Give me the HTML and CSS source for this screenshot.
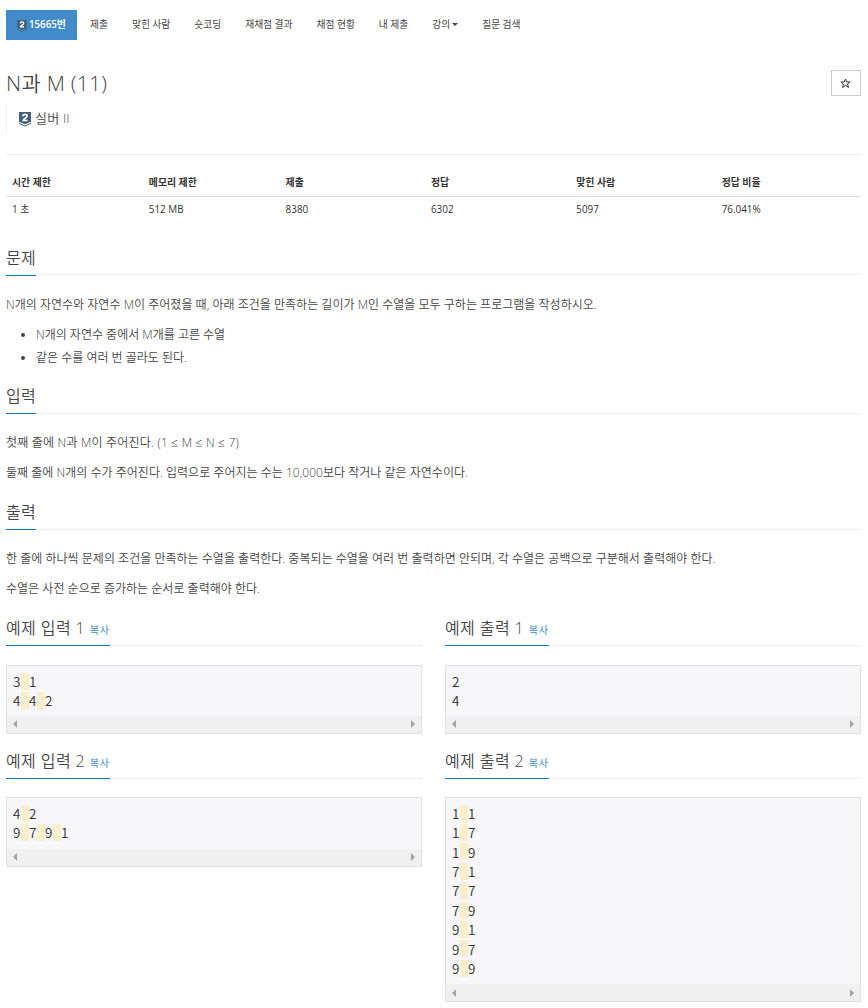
FILE: index.html
```
<!DOCTYPE html>
<html lang="ko">

<head>
    <meta charset="utf-8">
    <title>15665번: N과 M (11)</title>
    <meta name="viewport" content="width=device-width, initial-scale=1.0">
    <link rel="stylesheet" href="styles.css">
</head>

<body>
    <svg class="symbols" width="0" height="0">
        <symbol id="tier" viewBox="0 0 12 15">
            <path class="tier-shield" d="M0 0h12v9.8L6 12.3 0 9.8z" />
            <path class="tier-wing" d="M0 11.3l6 2.7 6-2.7" />
            <path class="tier-number" d="M3.8 4.2C3.9 1.7 8.1 1.7 8.1 4c0 1.7-3.8 3.1-4 4.5h4.4" />
        </symbol>
    </svg>

    <ul class="problem-menu">
        <li class="active"><a><svg class="tier-small"><use href="#tier" /></svg>15665번</a></li>
        <li><a>제출</a></li>
        <li><a>맞힌 사람</a></li>
        <li><a>숏코딩</a></li>
        <li><a>재채점 결과</a></li>
        <li><a>채점 현황</a></li>
        <li><a>내 제출</a></li>
        <li><a>강의<b class="caret"></b></a></li>
        <li><a>질문 검색</a></li>
    </ul>

    <div class="page-header">
        <h1>N과 M (11)</h1>
        <button class="btn-star" aria-label="star">
            <svg width="11" height="11" viewBox="0 0 11 11"><path d="M5.5 1l1.3 3h3.3L7.5 6l1 3.5-3-2-3 2 1-3.5L.9 4h3.3z" /></svg>
        </button>
    </div>
    <blockquote><svg class="tier-icon"><use href="#tier" /></svg>실버 II</blockquote>

    <table class="problem-info">
        <thead>
            <tr>
                <th>시간 제한</th>
                <th>메모리 제한</th>
                <th>제출</th>
                <th>정답</th>
                <th>맞힌 사람</th>
                <th>정답 비율</th>
            </tr>
        </thead>
        <tbody>
            <tr>
                <td>1 초</td>
                <td>512 MB</td>
                <td>8380</td>
                <td>6302</td>
                <td>5097</td>
                <td>76.041%</td>
            </tr>
        </tbody>
    </table>

    <section class="description">
        <div class="headline"><h2>문제</h2></div>
        <p>N개의 자연수와 자연수 M이 주어졌을 때, 아래 조건을 만족하는 길이가 M인 수열을 모두 구하는 프로그램을 작성하시오.</p>
        <ul>
            <li>N개의 자연수 중에서 M개를 고른 수열</li>
            <li>같은 수를 여러 번 골라도 된다.</li>
        </ul>
    </section>

    <section class="input">
        <div class="headline"><h2>입력</h2></div>
        <p class="constraint">첫째 줄에 N과 M이 주어진다. (1 ≤ M ≤ N ≤ 7)</p>
        <p>둘째 줄에 N개의 수가 주어진다. 입력으로 주어지는 수는 10,000보다 작거나 같은 자연수이다.</p>
    </section>

    <section class="output">
        <div class="headline"><h2>출력</h2></div>
        <p>한 줄에 하나씩 문제의 조건을 만족하는 수열을 출력한다. 중복되는 수열을 여러 번 출력하면 안되며, 각 수열은 공백으로 구분해서 출력해야 한다.</p>
        <p>수열은 사전 순으로 증가하는 순서로 출력해야 한다.</p>
    </section>

    <div class="samples">
        <section>
            <div class="headline"><h2>예제 입력 1 <a>복사</a></h2></div>
            <div class="sample">
<pre>3<i> </i>1
4<i> </i>4<i> </i>2</pre>
                <div class="scrollbar"><span class="left"></span><span class="right"></span></div>
            </div>
        </section>
        <section>
            <div class="headline"><h2>예제 출력 1 <a>복사</a></h2></div>
            <div class="sample">
<pre>2
4</pre>
                <div class="scrollbar"><span class="left"></span><span class="right"></span></div>
            </div>
        </section>
        <section>
            <div class="headline"><h2>예제 입력 2 <a>복사</a></h2></div>
            <div class="sample">
<pre>4<i> </i>2
9<i> </i>7<i> </i>9<i> </i>1</pre>
                <div class="scrollbar"><span class="left"></span><span class="right"></span></div>
            </div>
        </section>
        <section>
            <div class="headline"><h2>예제 출력 2 <a>복사</a></h2></div>
            <div class="sample">
<pre>1<i> </i>1
1<i> </i>7
1<i> </i>9
7<i> </i>1
7<i> </i>7
7<i> </i>9
9<i> </i>1
9<i> </i>7
9<i> </i>9</pre>
                <div class="scrollbar"><span class="left"></span><span class="right"></span></div>
            </div>
        </section>
    </div>
</body>

</html>
```

FILE: styles.css
```
* {
    box-sizing: border-box;
}

body {
    margin: 0;
    padding: 10px 7px 0 6px;
    height: 1008px;
    overflow: hidden;
    font-family: "Open Sans", "Noto Sans CJK KR", sans-serif;
    font-size: 12px;
    color: #444;
    background: #fff;
}

h1,
h2 {
    margin: 0;
    font-weight: 350;
}

.symbols {
    position: absolute;
}

.tier-shield {
    fill: #435f7a;
}

.tier-wing {
    fill: none;
    stroke: #435f7a;
    stroke-width: 1;
}

.tier-number {
    fill: none;
    stroke: #fff;
    stroke-width: 1.7;
}

.problem-menu {
    display: flex;
    gap: 2px;
    height: 30px;
    margin: 0;
    padding: 0;
    list-style: none;
    font-size: 9.8px;
}

.problem-menu a {
    display: flex;
    align-items: center;
    height: 30px;
    padding: 0 11px 3px;
    letter-spacing: -0.05px;
    white-space: nowrap;
}

.problem-menu .active a {
    width: 71px;
    padding: 0 10px 3px;
    background-color: #428bca;
    color: #fff;
    font-weight: 600;
}

.tier-small {
    flex: none;
    width: 10px;
    height: 12px;
    margin: 4px 2px 0 1px;
}

.caret {
    margin: 2px 0 0 2px;
    border-top: 3px solid #444;
    border-left: 3px solid transparent;
    border-right: 3px solid transparent;
}

.page-header {
    display: flex;
    justify-content: space-between;
    height: 64px;
    padding-top: 30px;
}

h1 {
    font-size: 21px;
    line-height: 27px;
    letter-spacing: 0.25px;
}

.btn-star {
    display: flex;
    align-items: center;
    justify-content: center;
    width: 30px;
    height: 26px;
    padding: 0 1px 0 0;
    border: 1px solid #ccc;
    background: #fff;
}

.btn-star path {
    fill: none;
    stroke: #333;
}

blockquote {
    display: flex;
    align-items: center;
    height: 29px;
    margin: 0 0 21px;
    padding: 0 0 2px 12px;
    border-left: 1px solid #eee;
    font-size: 13px;
    font-weight: 350;
    letter-spacing: 0.2px;
}

.tier-icon {
    width: 12px;
    height: 15px;
    margin: 4px 4px 0 0;
}

.problem-info {
    width: 100%;
    table-layout: fixed;
    border-collapse: separate;
    border-spacing: 0;
    border-top: 1px solid #eee;
    padding-top: 14px;
    font-size: 9.9px;
    color: #333;
}

.problem-info th,
.problem-info td {
    width: 17%;
    height: 27px;
    padding: 0 6px 3px;
    text-align: left;
}

.problem-info th:nth-child(-n+2) {
    width: 16%;
}

.problem-info th {
    height: 28px;
    padding-bottom: 2px;
    border-bottom: 1px solid #ddd;
    font-weight: 700;
}

.headline {
    height: 30px;
    margin-bottom: 19px;
    border-bottom: 1px dotted #dfe3e8;
}

.headline h2 {
    display: inline-block;
    height: 30px;
    border-bottom: 1px solid #0f76bb;
    font-size: 16px;
    line-height: 24px;
    letter-spacing: 0.4px;
    white-space: nowrap;
}

.headline a {
    font-size: 10px;
    font-weight: 400;
    letter-spacing: 0.8px;
    color: #428bca;
}

p {
    height: 20px;
    margin: 0 0 10px;
    line-height: 20px;
    font-weight: 350;
    letter-spacing: 0.02px;
    white-space: nowrap;
}

.constraint {
    letter-spacing: 0.2px;
}

.description {
    padding-top: 21px;
    height: 160px;
}

.description .headline {
    margin-bottom: 20px;
}

.description h2 {
    height: 31px;
    line-height: 26px;
}

.description p {
    margin-bottom: 8px;
}

.description ul {
    margin: 0;
    padding-left: 30px;
    font-weight: 350;
    line-height: 23px;
}

.input,
.output {
    height: 116px;
}

.samples {
    display: grid;
    grid-template-columns: 416px 416px;
    gap: 15px 23px;
    align-items: start;
}

.sample {
    border: 1px solid #e0e1e5;
    background-color: #f7f7f9;
}

pre {
    margin: 0;
    padding: 6px 6px 5px;
    font-family: "Noto Sans CJK KR", monospace;
    font-size: 13.5px;
    font-weight: 350;
    letter-spacing: 0.6px;
    line-height: 19.4px;
    color: #333;
}

.samples section:nth-child(n+3) .headline {
    margin-bottom: 18px;
}

.samples section:nth-child(n+3) pre {
    padding-bottom: 6px;
}

pre i {
    display: inline-block;
    width: 8px;
    height: 17px;
    margin: -5px 0 -1px;
    line-height: 17px;
    vertical-align: middle;
    background-color: #faeecb;
}

.scrollbar {
    display: flex;
    justify-content: space-between;
    align-items: center;
    height: 17px;
    padding: 0 6px;
    background-color: #f0f0f0;
}

.scrollbar span {
    border-top: 4px solid transparent;
    border-bottom: 4px solid transparent;
}

.scrollbar .left {
    border-right: 4px solid #a3a3a3;
}

.scrollbar .right {
    border-left: 4px solid #a3a3a3;
}
```
